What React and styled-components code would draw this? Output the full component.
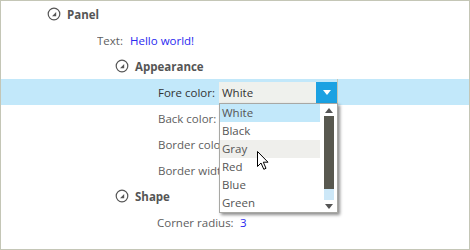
import React from 'react';
import styled, { createGlobalStyle } from 'styled-components';

const Global = createGlobalStyle`
  html, body { margin: 0; padding: 0; background: #fff; }
  body { font-family: "Open Sans", "Noto Sans", sans-serif; font-size: 11.5px; }
`;

const Frame = styled.div`
  position: relative;
  box-sizing: border-box;
  width: 470px;
  height: 250px;
  border: 1px solid #c4c6b6;
  background: #fff;
  overflow: hidden;
`;

const Tree = styled.div`
  display: flex;
  flex-direction: column;
`;

const HeaderRow = styled.div`
  height: 26px;
  display: flex;
  align-items: center;
  gap: 6px;
  padding-left: ${p => p.$indent}px;
  color: #555;
  font-weight: 700;
`;

const PropRow = styled.div`
  height: 26px;
  display: grid;
  grid-template-columns: ${p => p.$labelWidth}px 1fr;
  align-items: center;
  padding-left: ${p => p.$indent}px;
  background: ${p => (p.$selected ? '#c2e8fa' : 'transparent')};
`;

const Label = styled.div`
  white-space: nowrap;
  overflow: hidden;
  color: ${p => (p.$selected ? '#333' : '#5e5e5e')};
`;

const Value = styled.div`
  color: #2a2af0;
  white-space: nowrap;
`;

const ComboCell = styled.div`
  position: relative;
  align-self: stretch;
  width: 118px;
  border-right: 1px solid #c4c6b6;
  display: flex;
  align-items: center;
`;

const Field = styled.div`
  margin-top: 1px;
  flex: 1;
  height: 21px;
  display: flex;
  background: #eff1ed;
  border-bottom: 1px solid #c8c8c4;
`;

const FieldText = styled.div`
  flex: 1;
  padding-left: 3px;
  line-height: 21px;
  color: #333;
`;

const DropButton = styled.div`
  width: 21px;
  background: #1ba1e2;
  display: flex;
  align-items: center;
  justify-content: center;
`;

const Popup = styled.div`
  position: absolute;
  top: 24px;
  left: 0;
  box-sizing: border-box;
  width: 119px;
  height: 110px;
  border: 1px solid #a8a8a4;
  background: #fff;
  box-shadow: 2px 2px 3px rgba(0, 0, 0, 0.45);
  display: flex;
  z-index: 2;
`;

const List = styled.div`
  flex: 1;
  display: flex;
  flex-direction: column;
`;

const Item = styled.div`
  height: 18px;
  line-height: 18px;
  padding-left: 2px;
  color: #555;
  background: ${p => (p.$selected ? '#c2e8fa' : p.$hover ? '#efefec' : 'transparent')};
`;

const ScrollBar = styled.div`
  width: 17px;
  display: flex;
  flex-direction: column;
  align-items: center;
`;

const ArrowBox = styled.div`
  height: 12px;
  display: flex;
  align-items: center;
  justify-content: center;
`;

const Track = styled.div`
  flex: 1;
  width: 10px;
  display: flex;
  flex-direction: column;
  background: #cde8f8;
`;

const Thumb = styled.div`
  height: 73px;
  background: #58584f;
`;

const Cursor = styled.svg`
  position: absolute;
  left: 256px;
  top: 150px;
  z-index: 3;
`;

const Expander = () => (
  <svg width="14" height="14" viewBox="0 0 14 14">
    <circle cx="7" cy="7" r="5.8" fill="none" stroke="#555" strokeWidth="1.2" />
    <polygon points="9.2,5 9.2,9.2 5,9.2" fill="#555" />
  </svg>
);

const Tri = ({ down, color }) => (
  <svg width="8" height="5" viewBox="0 0 8 5">
    <polygon points={down ? '0,0 8,0 4,5' : '0,5 8,5 4,0'} fill={color} />
  </svg>
);

const colors = ['White', 'Black', 'Gray', 'Red', 'Blue', 'Green'];

export default function App() {
  return (
    <>
      <Global />
      <Frame>
        <Tree>
          <HeaderRow $indent={46}>
            <Expander />
            <span>Panel</span>
          </HeaderRow>
          <PropRow $indent={96} $labelWidth={33}>
            <Label>Text:</Label>
            <Value>Hello world!</Value>
          </PropRow>
          <HeaderRow $indent={114}>
            <Expander />
            <span>Appearance</span>
          </HeaderRow>
          <PropRow $indent={157} $labelWidth={61} $selected>
            <Label $selected>Fore color:</Label>
            <ComboCell>
              <Field>
                <FieldText>White</FieldText>
                <DropButton>
                  <Tri down color="#fff" />
                </DropButton>
              </Field>
              <Popup>
                <List>
                  {colors.map(c => (
                    <Item key={c} $selected={c === 'White'} $hover={c === 'Gray'}>
                      {c}
                    </Item>
                  ))}
                </List>
                <ScrollBar>
                  <ArrowBox>
                    <Tri color="#555" />
                  </ArrowBox>
                  <Track>
                    <Thumb />
                  </Track>
                  <ArrowBox>
                    <Tri down color="#555" />
                  </ArrowBox>
                </ScrollBar>
              </Popup>
            </ComboCell>
          </PropRow>
          <PropRow $indent={157} $labelWidth={61}>
            <Label>Back color:</Label>
            <Value />
          </PropRow>
          <PropRow $indent={157} $labelWidth={61}>
            <Label>Border color:</Label>
            <Value />
          </PropRow>
          <PropRow $indent={157} $labelWidth={61}>
            <Label>Border width:</Label>
            <Value />
          </PropRow>
          <HeaderRow $indent={114}>
            <Expander />
            <span>Shape</span>
          </HeaderRow>
          <PropRow $indent={156} $labelWidth={83}>
            <Label>Corner radius:</Label>
            <Value>3</Value>
          </PropRow>
        </Tree>
        <Cursor width="13" height="20" viewBox="0 0 13 20">
          <path
            d="M0.5,0.5 L0.5,15.5 L4,12 L6.8,18.3 L9,17.3 L6.3,11.2 L11,11.2 Z"
            fill="#fff"
            stroke="#000"
            strokeWidth="1"
            strokeLinejoin="miter"
          />
        </Cursor>
      </Frame>
    </>
  );
}
